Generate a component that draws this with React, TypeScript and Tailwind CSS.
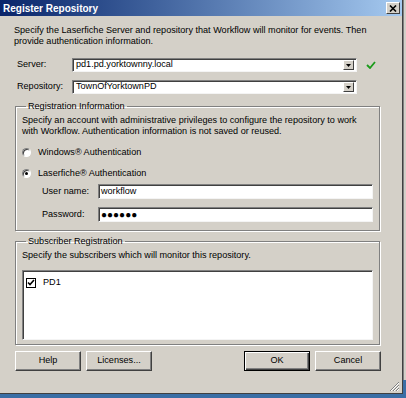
import React from 'react'

const font = { fontFamily: '"Liberation Sans", Arial, sans-serif' }

function Sunken({ className = '', children }: { className?: string; children?: React.ReactNode }) {
  return (
    <div
      className={`bg-white border border-t-[#808080] border-l-[#808080] border-b-[#f4f4f4] border-r-[#f4f4f4] shadow-[inset_1px_1px_0_#404040] ${className}`}
    >
      {children}
    </div>
  )
}

function Combo({ value }: { value: string }) {
  return (
    <Sunken className="flex h-[14px] w-[285px] items-center pl-[3px] pr-[2px]">
      <span className="flex-1 leading-none">{value}</span>
      <span className="flex h-[10px] w-[11px] items-center justify-center border border-t-white border-l-white border-b-[#404040] border-r-[#404040] bg-[#d4d0c8]">
        <svg width="5" height="3" viewBox="0 0 5 3">
          <path d="M0 0h5L2.5 3z" fill="#000" />
        </svg>
      </span>
    </Sunken>
  )
}

function Radio({ checked, label }: { checked?: boolean; label: string }) {
  return (
    <div className="flex items-center gap-[7px]">
      <span className="flex h-[9px] w-[9px] items-center justify-center rounded-full border border-t-[#808080] border-l-[#808080] border-b-white border-r-white bg-white shadow-[inset_1px_1px_0_#404040]">
        {checked && <span className="h-[3px] w-[3px] rounded-full bg-black" />}
      </span>
      <span>{label}</span>
    </div>
  )
}

function Button({ label, primary }: { label: string; primary?: boolean }) {
  return (
    <button
      className={`h-[20px] w-[66px] bg-[#d4d0c8] leading-none ${
        primary
          ? 'border border-black shadow-[inset_1px_1px_0_#fff,inset_-1px_-1px_0_#404040,inset_-2px_-2px_0_#808080]'
          : 'border border-t-white border-l-white border-b-[#404040] border-r-[#404040] shadow-[inset_-1px_-1px_0_#808080]'
      }`}
    >
      {label}
    </button>
  )
}

export default function App() {
  return (
    <div className="flex h-[398px] w-[406px] items-start overflow-hidden bg-[#3a6ea5] text-[9.1px] text-black" style={font}>
      <div className="flex h-[394px] w-[403px] flex-col border-r border-b border-[#404040] bg-[#d4d0c8]">
        <div className="flex h-[16px] items-center justify-between bg-gradient-to-r from-[#0a246a] to-[#a6caf0] pl-[3px] pr-[2px]">
          <span className="text-[10px] font-bold text-white">Register Repository</span>
          <span className="flex h-[12px] w-[14px] items-center justify-center border border-t-white border-l-white border-b-[#404040] border-r-[#404040] bg-[#d4d0c8]">
            <svg width="8" height="7" viewBox="0 0 8 7">
              <path d="M1 0.5L7 6.5M7 0.5L1 6.5" stroke="#000" strokeWidth="1.6" />
            </svg>
          </span>
        </div>

        <div className="flex flex-1 flex-col pl-[14px] pr-[21px]">
          <p className="-mr-[10px] mt-[9px] leading-[11px]">
            Specify the Laserfiche Server and repository that Workflow will monitor for events. Then provide authentication information.
          </p>

          <div className="mt-[11px] flex items-center">
            <span className="w-[58px] pl-[3px]">Server:</span>
            <Combo value="pd1.pd.yorktownny.local" />
            <svg className="ml-[9px]" width="10" height="8" viewBox="0 0 10 8">
              <path d="M1 4l3 3 5-6" stroke="#1a9b1a" strokeWidth="1.8" fill="none" />
            </svg>
          </div>
          <div className="mt-[8px] flex items-center">
            <span className="w-[58px] pl-[3px]">Repository:</span>
            <Combo value="TownOfYorktownPD" />
          </div>

          <fieldset className="mx-px mt-[7px] h-[130px] border border-[#808080] px-[6px] shadow-[1px_1px_0_#fff,inset_1px_1px_0_#fff]">
            <legend className="ml-[4px] px-[2px] leading-[11px]">Registration Information</legend>
            <p className="mt-[3px] leading-[11px]">
              Specify an account with administrative privileges to configure the repository to work with Workflow. Authentication information is not saved or reused.
            </p>
            <div className="mt-[9px]">
              <Radio label="Windows® Authentication" />
            </div>
            <div className="mt-[7px]">
              <Radio checked label="Laserfiche® Authentication" />
            </div>
            <div className="mt-[4px] flex items-center">
              <span className="w-[76px] pl-[20px]">User name:</span>
              <Sunken className="flex h-[15px] flex-1 items-center pl-[2px]">workflow</Sunken>
            </div>
            <div className="mt-[8px] flex items-center">
              <span className="w-[76px] pl-[20px]">Password:</span>
              <Sunken className="flex h-[15px] flex-1 items-center pl-[2px] text-[10px]">●●●●●●</Sunken>
            </div>
          </fieldset>

          <fieldset className="mx-px mt-[5px] h-[109px] border border-[#808080] px-[6px] shadow-[1px_1px_0_#fff,inset_1px_1px_0_#fff]">
            <legend className="ml-[4px] px-[2px] leading-[11px]">Subscriber Registration</legend>
            <p className="mt-[3px] leading-[11px]">Specify the subscribers which will monitor this repository.</p>
            <Sunken className="mt-[9px] h-[70px] pl-[3px] pt-[5px]">
              <div className="flex items-center gap-[7px]">
                <span className="flex h-[10px] w-[10px] items-center justify-center border border-black bg-white">
                  <svg width="8" height="7" viewBox="0 0 8 7">
                    <path d="M1 3.5l2 2 4-4.5" stroke="#000" strokeWidth="1.6" fill="none" />
                  </svg>
                </span>
                <span>PD1</span>
              </div>
            </Sunken>
          </fieldset>

          <div className="mt-[6px] flex gap-[5px] pl-px">
            <Button label="Help" />
            <Button label="Licenses..." />
            <div className="flex-1" />
            <Button label="OK" primary />
            <Button label="Cancel" />
          </div>

          <div className="mt-auto flex justify-end pb-[1px]">
            <svg className="-mr-[19px]" width="11" height="11" viewBox="0 0 11 11">
              <path d="M10 1L1 10M10 4L4 10M10 7L7 10" stroke="#808080" strokeWidth="1" />
              <path d="M10 2L2 10M10 5L5 10M10 8L8 10" stroke="#fff" strokeWidth="1" />
            </svg>
          </div>
        </div>
      </div>
      <div className="h-[380px] w-[3px] border-l border-[#808080] bg-[#d4d0c8]" />
    </div>
  )
}
